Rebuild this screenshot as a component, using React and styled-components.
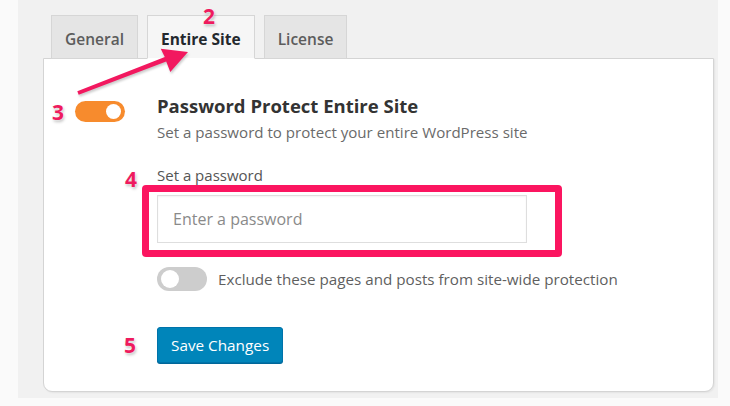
import styled, { createGlobalStyle } from "styled-components";

const Global = createGlobalStyle`
  html, body {
    margin: 0;
    padding: 0;
    background: #fafafa;
    font-family: "Open Sans", "Liberation Sans", sans-serif;
  }
`;

const Page = styled.div`
  width: 730px;
  height: 406px;
  box-sizing: border-box;
  padding: 0 12px 8px 18px;
  background: #fafafa;
  position: relative;
`;

const Wrap = styled.div`
  height: 100%;
  box-sizing: border-box;
  background: #f1f1f1;
  padding: 15px 4px 6px 25px;
  display: flex;
  flex-direction: column;
`;

const Tabs = styled.div`
  display: flex;
  gap: 9px;
  padding-left: 8px;
  margin-bottom: -1px;
  position: relative;
  z-index: 1;
`;

const Tab = styled.div`
  position: relative;
  height: 44px;
  box-sizing: border-box;
  padding: 3px 13px 0;
  display: flex;
  align-items: center;
  border: 1px solid #d6d6d6;
  border-bottom: ${(p) => (p.$active ? "1px solid #fff" : "1px solid #d6d6d6")};
  background: ${(p) => (p.$active ? "#f6f6f6" : "#e5e5e5")};
  color: ${(p) => (p.$active ? "#23282d" : "#5c5c5c")};
  font-size: 15.5px;
  line-height: 18px;
  font-weight: ${(p) => (p.$active ? 700 : 600)};
`;

const Step = styled.span`
  position: absolute;
  color: #ee1b5e;
  font-family: "Open Sans", "Liberation Sans", sans-serif;
  font-weight: 700;
  font-size: 21px;
  line-height: 18px;
  text-shadow: 0 0 2px #fff, 1px 2px 3px rgba(0, 0, 0, 0.25);
  left: ${(p) => p.$x}px;
  top: ${(p) => p.$y}px;
`;

const Panel = styled.div`
  flex: 1;
  background: #fff;
  border: 1px solid #d4d4d4;
  border-radius: 0 0 9px 9px;
  box-shadow: 1px 1px 2px rgba(0, 0, 0, 0.06);
  padding: 36px 0 0 0;
  display: grid;
  grid-template-columns: 113px 1fr;
  align-content: start;
`;

const ToggleCell = styled.div`
  display: flex;
  justify-content: flex-end;
  padding: 6px 32px 0 0;
`;

const Switch = styled.div`
  position: relative;
  width: 50px;
  height: ${(p) => (p.$on ? 21 : 24)}px;
  border-radius: 12px;
  background: ${(p) => (p.$on ? "#f78b2d" : "#cdcdcd")};
  flex-shrink: 0;

  &::after {
    content: "";
    position: absolute;
    top: 3px;
    ${(p) => (p.$on ? "right: 4px;" : "left: 4px;")}
    width: ${(p) => (p.$on ? 15 : 18)}px;
    height: ${(p) => (p.$on ? 15 : 18)}px;
    border-radius: 50%;
    background: #fff;
  }
`;

const Content = styled.div`
  grid-column: 2;
  display: flex;
  flex-direction: column;
  align-items: flex-start;
`;

const Title = styled.h2`
  margin: 0;
  font-size: 18.5px;
  line-height: 22px;
  font-weight: 700;
  color: #333;
`;

const Sub = styled.p`
  margin: 5px 0 0;
  font-size: 15.1px;
  line-height: 20px;
  color: #6a6a6a;
`;

const Field = styled.div`
  position: relative;
  margin-top: 23px;
  display: flex;
  flex-direction: column;
  align-items: flex-start;
`;

const Label = styled.label`
  font-size: 15px;
  line-height: 20px;
  color: #555;
`;

const InputWrap = styled.div`
  position: relative;
  margin-top: 10px;
`;

const Input = styled.input`
  width: 370px;
  height: 48px;
  box-sizing: border-box;
  border: 1px solid #dedede;
  box-shadow: inset 0 1px 2px rgba(0, 0, 0, 0.05);
  padding: 0 15px;
  font-family: "Open Sans", "Liberation Sans", sans-serif;
  font-size: 16px;
  color: #333;
  outline: none;

  &::placeholder {
    color: #8a8a8a;
  }
`;

const Highlight = styled.div`
  position: absolute;
  top: -10px;
  left: -15px;
  right: -35px;
  bottom: -14px;
  border: 7px solid #fb1560;
  border-radius: 4px;
  pointer-events: none;
`;

const OptionRow = styled.div`
  margin-top: 24px;
  display: flex;
  align-items: center;
  gap: 11px;
  font-size: 15.2px;
  color: #5f5f5f;
`;

const Actions = styled.div`
  position: relative;
  margin-top: 36px;
`;

const SaveButton = styled.button`
  height: 36px;
  padding: 0 13px;
  border: 1px solid #0073aa;
  border-radius: 3px;
  background: #0085ba;
  color: #fff;
  font-family: "Open Sans", "Liberation Sans", sans-serif;
  font-size: 15.3px;
  box-shadow: 0 1px 0 #006799;
`;

const Arrow = styled.svg`
  position: absolute;
  left: 0;
  top: 0;
  overflow: visible;
  pointer-events: none;
  z-index: 3;
  filter: drop-shadow(1px 2px 1px rgba(0, 0, 0, 0.2));
`;

export default function App() {
  return (
    <>
      <Global />
      <Page>
        <Wrap>
          <Tabs>
            <Tab>General</Tab>
            <Tab $active>
              Entire Site
              <Step $x={55} $y={-9}>2</Step>
            </Tab>
            <Tab>License</Tab>
          </Tabs>
          <Panel>
            <ToggleCell>
              <div style={{ position: "relative" }}>
                <Switch $on />
                <Step $x={-23} $y={2}>3</Step>
              </div>
            </ToggleCell>
            <Content>
              <Title>Password Protect Entire Site</Title>
              <Sub>Set a password to protect your entire WordPress site</Sub>
              <Field>
                <Step $x={-32} $y={5}>4</Step>
                <Label>Set a password</Label>
                <InputWrap>
                  <Input type="password" placeholder="Enter a password" />
                  <Highlight />
                </InputWrap>
              </Field>
              <OptionRow>
                <Switch />
                Exclude these pages and posts from site-wide protection
              </OptionRow>
              <Actions>
                <Step $x={-33} $y={9}>5</Step>
                <SaveButton>Save Changes</SaveButton>
              </Actions>
            </Content>
          </Panel>
        </Wrap>
        <Arrow width="730" height="406" viewBox="0 0 730 406">
          <polygon
            points="77.3,91.2 164.8,56.9 160.7,48.7 188,52 170.3,72.1 166.2,61.5 78.7,94.8"
            fill="#f2185f"
          />
        </Arrow>
      </Page>
    </>
  );
}
